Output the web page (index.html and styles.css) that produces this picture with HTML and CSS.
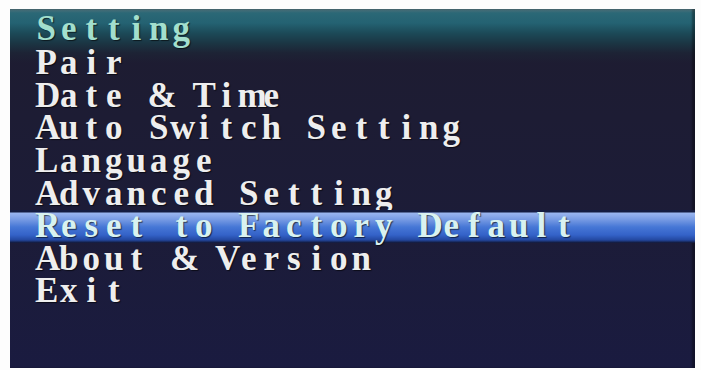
FILE: index.html
```html
<!DOCTYPE html>
<html>
<head>
<meta charset="utf-8">
<link rel="stylesheet" href="styles.css">
</head>
<body>
<div class="screen">
  <div class="menu">
    <div class="item title"><span>S</span><span>e</span><span>t</span><span>t</span><span>i</span><span>n</span><span>g</span></div>
    <div class="item"><span>P</span><span>a</span><span>i</span><span>r</span></div>
    <div class="item"><span>D</span><span>a</span><span>t</span><span>e</span><span> </span><span>&amp;</span><span> </span><span>T</span><span>i</span><span>m</span><span>e</span></div>
    <div class="item"><span>A</span><span>u</span><span>t</span><span>o</span><span> </span><span>S</span><span>w</span><span>i</span><span>t</span><span>c</span><span>h</span><span> </span><span>S</span><span>e</span><span>t</span><span>t</span><span>i</span><span>n</span><span>g</span></div>
    <div class="item"><span>L</span><span>a</span><span>n</span><span>g</span><span>u</span><span>a</span><span>g</span><span>e</span></div>
    <div class="item"><span>A</span><span>d</span><span>v</span><span>a</span><span>n</span><span>c</span><span>e</span><span>d</span><span> </span><span>S</span><span>e</span><span>t</span><span>t</span><span>i</span><span>n</span><span>g</span></div>
    <div class="item selected"><span>R</span><span>e</span><span>s</span><span>e</span><span>t</span><span> </span><span>t</span><span>o</span><span> </span><span>F</span><span>a</span><span>c</span><span>t</span><span>o</span><span>r</span><span>y</span><span> </span><span>D</span><span>e</span><span>f</span><span>a</span><span>u</span><span>l</span><span>t</span></div>
    <div class="item"><span>A</span><span>b</span><span>o</span><span>u</span><span>t</span><span> </span><span>&amp;</span><span> </span><span>V</span><span>e</span><span>r</span><span>s</span><span>i</span><span>o</span><span>n</span></div>
    <div class="item"><span>E</span><span>x</span><span>i</span><span>t</span></div>
  </div>
</div>
</body>
</html>
```
FILE: styles.css
```css
html, body {
  margin: 0;
  padding: 0;
  background: #fdfdfd;
}
body {
  width: 701px;
  height: 370px;
  overflow: hidden;
}
.screen {
  margin: 9px 6px 0 10px;
  height: 359px;
  background:
    linear-gradient(to bottom,
      #4f6f78 0px,
      #2b6876 4px,
      #246272 14px,
      #1c4a58 24px,
      #1b3644 34px,
      #1d2335 44px,
      rgba(29,30,50,0) 54px),
    linear-gradient(to bottom, #1e1c30 0%, #1c1c38 60%, #1a1b40 100%);
  box-shadow: inset -3px 0 2px rgba(0,0,0,0.35);
}
.menu {
  padding-top: 4.2px;
  display: flex;
  flex-direction: column;
}
.item {
  height: 32.6px;
  line-height: 32.6px;
  padding-left: 25px;
  font-family: "Liberation Serif", "DejaVu Serif", serif;
  font-weight: bold;
  font-size: 35px;
  color: #eeeeee;
  white-space: pre;
  text-shadow: 1px 1px 1px rgba(0,0,0,0.6);
}
.item span {
  display: inline-block;
  width: 22.5px;
  text-align: center;
}
.title {
  height: 34px;
  color: #a3dfcd;
}
.selected {
  color: #d9f2f0;
  background: linear-gradient(to bottom,
    #161c40 0px,
    #141c40 2px,
    #9ab6ef 3px,
    #7a9de4 9px,
    #4677d6 17px,
    #3462c8 25px,
    #2348a0 30px,
    #141c40 32.6px);
}
```
